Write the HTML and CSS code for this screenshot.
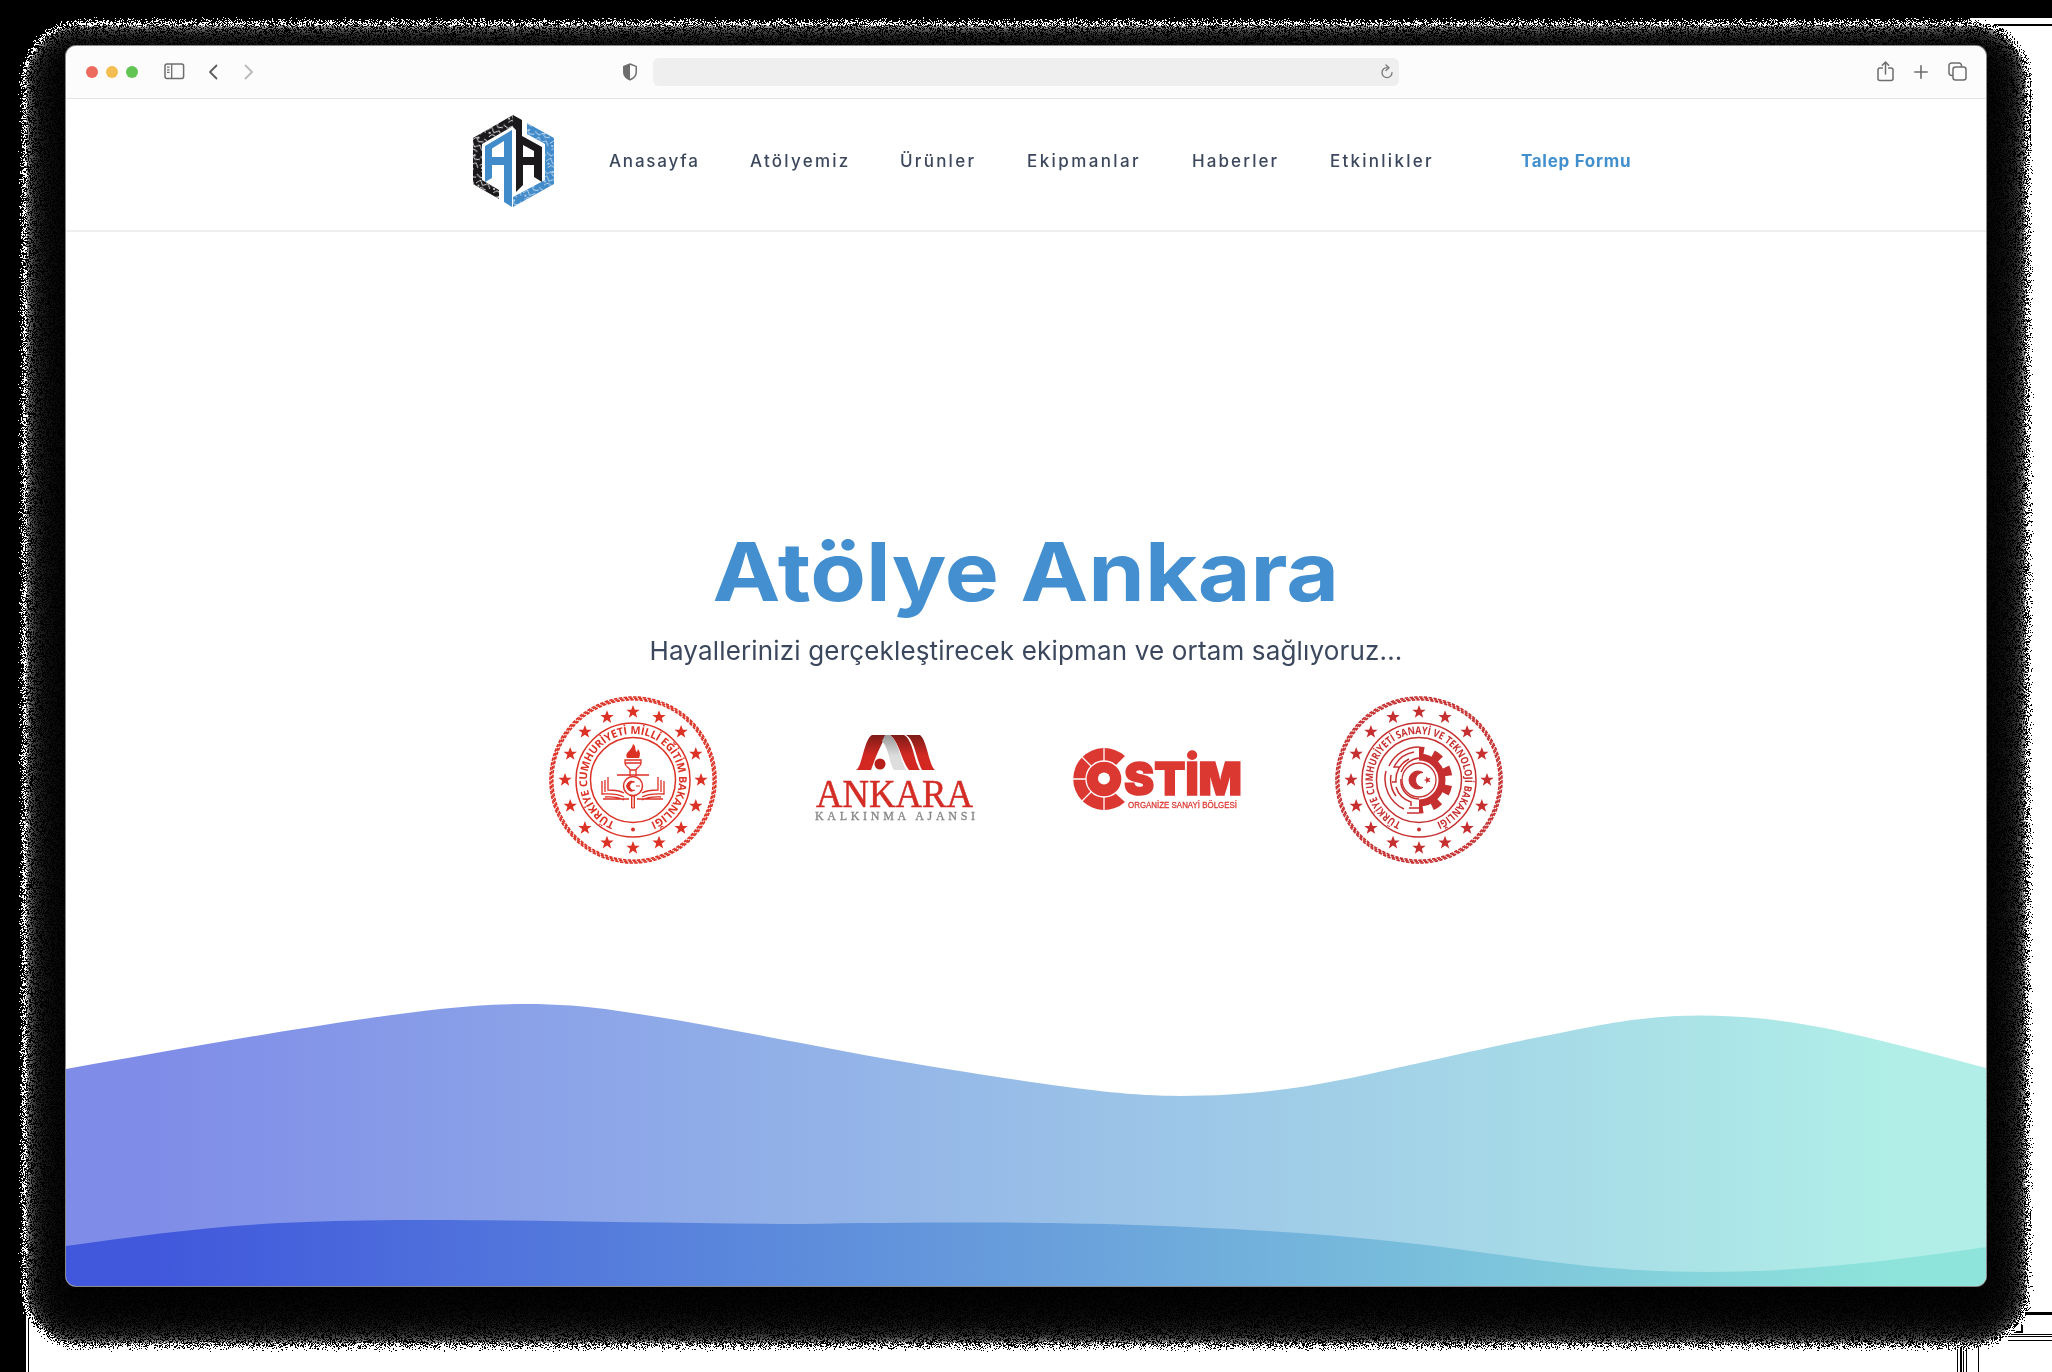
FILE: index.html
```html
<!DOCTYPE html>
<html lang="tr">
<head>
<meta charset="utf-8">
<title>Atölye Ankara</title>
<link rel="stylesheet" href="styles.css">
</head>
<body>
<canvas class="shadow" width="2052" height="1372"></canvas>
<main class="window">
  <div class="toolbar">
    <div class="tools left">
      <span class="dot red"></span><span class="dot yellow"></span><span class="dot green"></span>
      <svg class="sidebar" width="21" height="17" viewBox="0 0 21 17" fill="none" stroke="#6d6d6d" stroke-width="1.5"><rect x="1" y="1" width="18.6" height="14.6" rx="2"/><path d="M7.7 1v14.6M3 4.2h2.6M3 6.8h2.6M3 9.4h2.6" stroke-width="1.3"/></svg>
      <svg class="back" width="10" height="16" viewBox="0 0 10 16" fill="none" stroke="#5c5c5c" stroke-width="1.8" stroke-linecap="round" stroke-linejoin="round"><path d="M8.5 1.5 2 8l6.5 6.5"/></svg>
      <svg class="forward" width="10" height="16" viewBox="0 0 10 16" fill="none" stroke="#bababa" stroke-width="1.8" stroke-linecap="round" stroke-linejoin="round"><path d="M1.5 1.5 8 8l-6.5 6.5"/></svg>
    </div>
    <svg class="shield" width="16" height="18" viewBox="0 0 16 18"><path d="M8 1 14.2 3.4v6c0 3.4-2.6 5.7-6.2 7.4-3.6-1.7-6.2-4-6.2-7.4v-6z" fill="none" stroke="#6d6d6d" stroke-width="1.5"/><path d="M8 1v15.8c-3.6-1.7-6.2-4-6.2-7.4v-6z" fill="#6d6d6d"/></svg>
    <div class="address"><svg width="12" height="15" viewBox="0 0 12 15" fill="none" stroke="#777" stroke-width="1.3" stroke-linecap="round"><path d="M6 3.6a5 5 0 1 0 5 5M5 .9l3 2.8-3 2.8"/></svg></div>
    <div class="tools right">
      <svg width="17" height="21" viewBox="0 0 17 21" fill="none" stroke="#6d6d6d" stroke-width="1.5" stroke-linecap="round" stroke-linejoin="round"><path d="M5.4 7H3a2 2 0 0 0-2 2v8.500a2 2 0 0 0 2 2h11a2 2 0 0 0 2-2V9a2 2 0 0 0-2-2h-2.400M8.500 13V1.300M5.300 4.300l3.200-3.200 3.200 3.200"/></svg>
      <svg width="14" height="14" viewBox="0 0 14 14" fill="none" stroke="#6d6d6d" stroke-width="1.6" stroke-linecap="round"><path d="M7 .8v12.400M.8 7h12.400"/></svg>
      <svg width="19" height="19" viewBox="0 0 19 19" fill="none" stroke="#6d6d6d" stroke-width="1.500"><rect x="5" y="5" width="13" height="13" rx="2.500"/><path d="M5 13.500H3.500A2.500 2.500 0 0 1 1 11V3.500A2.500 2.500 0 0 1 3.500 1H11a2.500 2.500 0 0 1 2.500 2.500V5"/></svg>
    </div>
  </div>

  <header class="header">
    <svg class="logo" width="82" height="92" viewBox="0 0 82 92">
      <defs>
        <pattern id="traces" width="16" height="18" patternUnits="userSpaceOnUse" patternTransform="rotate(12)"><path d="M0 3l5 3 3-3 3 4 5-1M1 12l4-4 3 5 5-3 3 5M4 18l3-3 5 2" fill="none" stroke="#fff" stroke-width=".9"/><circle cx="10" cy="3" r="1" fill="#fff"/><circle cx="4" cy="14" r="1" fill="#fff"/></pattern>
      </defs>
      <path d="M0 23 40 0v11L9 29v36l17 10v9L0 69z" fill="#1b191b"/><path d="M0 23 40 0v11L9 29v36l17 10v9L0 69z" fill="url(#traces)"/>
      <path d="M54 8 81 23v46L40 92V82l32-17V29L54 19z" fill="#428bca"/><path d="M54 8 81 23v46L40 92V82l32-17V29L54 19z" fill="url(#traces)" opacity=".75"/>
      <path d="M39 15V92l-8-5V50H19v13l-7 4V31zM31 26 19 33.500V42h12z" fill="#428bca" fill-rule="evenodd"/>
      <path d="M40 0l9 5v16l20 11v35l-8-5V50H50v20l-7 7V15l-3-3zM50 30v12h11v-6z" fill="#1b191b" fill-rule="evenodd"/>
    </svg>
    <nav class="nav">
      <a class="n1">Anasayfa</a><a class="n2">Atölyemiz</a><a class="n3">Ürünler</a><a class="n4">Ekipmanlar</a><a class="n5">Haberler</a><a class="n6">Etkinlikler</a>
    </nav>
    <a class="cta">Talep Formu</a>
  </header>

  <section class="hero">
    <h1>Atölye Ankara</h1>
    <p>Hayallerinizi gerçekleştirecek ekipman ve ortam sağlıyoruz...</p>
    <div class="partners">
      <svg class="seal" width="168" height="168" viewBox="-84 -84 168 168" fill="none" stroke="#dc3226">
        <defs>
          <path id="ring" d="M-17 42.700A46 46 0 1 1 17 42.700"/>
          <path id="star" d="M0-7 1.800-2.200H6.700L2.800.8 4.200 5.700 0 2.800-4.200 5.700-2.800.8-6.700-2.200H-1.800z" stroke="none"/>
          <g id="stars">
            <use href="#star" y="-68"/><use href="#star" x="26" y="-62.800"/><use href="#star" x="48.100" y="-48.100"/><use href="#star" x="62.800" y="-26"/><use href="#star" x="68"/><use href="#star" x="62.800" y="26"/><use href="#star" x="48.100" y="48.100"/><use href="#star" x="26" y="62.800"/><use href="#star" y="68"/><use href="#star" x="-26" y="62.800"/><use href="#star" x="-48.100" y="48.100"/><use href="#star" x="-62.800" y="26"/><use href="#star" x="-68"/><use href="#star" x="-62.800" y="-26"/><use href="#star" x="-48.100" y="-48.100"/><use href="#star" x="-26" y="-62.800"/>
          </g>
          <g id="rope" stroke-width="1.600"><circle r="83" pathLength="432" stroke-dasharray="2.900 1.100"/><circle r="81.600" pathLength="432" stroke-dasharray="2.900 1.100" stroke-dashoffset="-.9"/><circle r="80.200" pathLength="432" stroke-dasharray="2.900 1.100" stroke-dashoffset="-1.800"/></g>
        </defs>
        <use href="#rope"/>
        <use href="#stars" fill="#dc3226"/>
        <circle r="57" stroke-width="1.500"/><circle r="42.500" stroke-width="1.500"/>
        <text class="ringtext" fill="#dc3226" stroke="none"><textPath href="#ring" textLength="252" startOffset="1">TÜRKİYE CUMHURİYETİ MİLLİ EĞİTİM BAKANLIĞI</textPath></text>
        <circle cy="49.500" r="2" fill="#dc3226" stroke="none"/>
        <path d="M-6-22C-9-28-1-29 0-36c4 3 1 6 4 8l1-3c3 4 2 7 1 9z" fill="#dc3226" stroke="none"/>
        <path d="M-8-20H8v3c0 4-4 4-5 7h-6c-1-3-5-3-5-7zM-8-17H8M-16-5H16M-3-10v6M3-10v6" stroke-width="1.300"/>
        <path d="M-9 17C-17 13-23 14-31 14V1M-9 20c-8-4-14-3-19-3M-25-3v13c6 0 11 0 16 3M9 17c8-4 14-3 22-3V1M9 20c8-4 14-3 19-3M25-3v13c-6 0-11 0-16 3M-28 0v12M28 0v12M-30 19h26M4 19h26" stroke-width="1.300"/>
        <circle cy="6" r="9.500" fill="#fff" stroke-width="1.500"/><path d="M1.500 2A5 5 0 1 0 1.500 10.300 4.200 4.200 0 1 1 1.500 2zM3 6h4" fill="#dc3226" stroke-width="1"/>
        <path d="M-1.500 16h3v12h-3z" fill="#f5b0a8" stroke-width="1"/>
      </svg>
      <svg class="agency" width="168" height="96" viewBox="0 0 168 96">
        <defs><linearGradient id="red" x2="0" y2="1"><stop stop-color="#7d1c18"/><stop offset=".6" stop-color="#d32822"/></linearGradient><linearGradient id="gray" x2="0" y2="1"><stop stop-color="#999"/><stop offset=".6" stop-color="#ddd"/></linearGradient></defs>
        <path d="M61 3H76C68 15 63 30 60 38H45c6-2 8-31 16-35z" fill="url(#red)"/>
        <path d="M74 3h4c9 3 12 26 17 35H83C77 28 79 19 71 9z" fill="url(#gray)"/>
        <path d="M79 3h14c9 4 11 30 16 35H98C90 28 88 9 79 3z" fill="url(#red)"/><path d="M95 3h14c7 5 9 31 15 35h-13C105 27 104 8 95 3z" fill="url(#red)"/><circle cx="69" cy="32" r="5.500" fill="#b71f1b"/>
        <text class="agencyname" x="5" y="75" textLength="157" lengthAdjust="spacingAndGlyphs">ANKARA</text><text class="agencysub" x="4" y="88" textLength="160">KALKINMA AJANSI</text>
      </svg>
      <svg class="ostim" width="168" height="64" viewBox="0 0 168 64">
        <path d="M52 8A31 31 0 1 0 52 54L43 46A19 19 0 0 1 43 17z" fill="#dc3832"/><circle cx="31" cy="31" r="18" fill="#dc3832" stroke="#fff" stroke-width="1.300"/><circle cx="31" cy="30.500" r="6" fill="#fff"/><path d="M31 0v13M31 49v14M0 31h13M9 9l9 9M9 53l9-9" stroke="#fff" stroke-width="1.300"/>
        <text class="ostimname" x="51" y="47" textLength="118" lengthAdjust="spacingAndGlyphs">STİM</text><text class="ostimsub" x="55" y="60" textLength="109" lengthAdjust="spacingAndGlyphs">ORGANİZE SANAYİ BÖLGESİ</text>
      </svg>
      <svg class="seal" width="168" height="168" viewBox="-84 -84 168 168" fill="none" stroke="#c62f30">
        <use href="#rope"/>
        <use href="#stars" fill="#c62f30"/>
        <circle r="57" stroke-width="1.500"/><circle r="42.500" stroke-width="1.500"/>
        <text class="ringtext small" fill="#c62f30" stroke="none"><textPath href="#ring" textLength="252" startOffset="1" lengthAdjust="spacingAndGlyphs">TÜRKİYE CUMHURİYETİ SANAYİ VE TEKNOLOJİ BAKANLIĞI</textPath></text>
        <circle cy="49.500" r="2" fill="#c62f30" stroke="none"/>
        <path d="M0-23A23 23 0 0 1 0 23" stroke-width="7"/><path d="M0-29.500A29.500 29.500 0 0 1 0 29.500" stroke-width="8" stroke-dasharray="5 9.500 9 9.500 9 9.500 9 9.500 9 9.500 9"/>
        <path d="M0-33A33 33 0 0 0-30-14M-33-9A33 33 0 0 0-15 29M-5-28A28 28 0 0 0-25-13h5M-28-5A28 28 0 0 0-23 16M-10-21A23 23 0 0 0-23 2h-4M-23 7A23 23 0 0 0-8 22v4M0-22A22 22 0 0 0-18-8M-18-1A18 18 0 0 0 0 19M-12 33H0M-10 28H0" stroke-width="1.500"/>
        <circle r="17" stroke-width="1.300"/><path d="M4-7.500A9 9 0 1 0 4 7.500 7.500 7.500 0 1 1 4-7.500z" fill="#c62f30"/><use href="#star" transform="translate(8.500 0) rotate(-18) scale(.55)" fill="#c62f30"/>
      </svg>
    </div>
    <svg class="waves" width="1920" height="284" viewBox="0 0 1920 284">
      <defs><linearGradient id="sea"><stop offset=".05" stop-color="#4158dc"/><stop offset=".95" stop-color="#8ee4db"/></linearGradient><linearGradient id="seaLight"><stop offset=".05" stop-color="#808de8"/><stop offset=".95" stop-color="#b0eee7"/></linearGradient></defs>
      <path d="M0 67C90 51 200 31 306 15.700C360 8 410 2 460 2C490 2 520 4 551 8.700C610 17 670 29 735 41C790 52 850 62 900 70C1000 86 1060 94 1114 94C1200 94 1260 82 1335 65C1390 53 1440 41 1494 31C1550 19 1590 13.500 1635 13.500C1700 13.500 1755 24 1812 38C1850 47 1885 57 1920 66V284H0z" fill="url(#seaLight)"/>
      <path d="M0 244C80 233 150 223 240 220C370 215 540 221 735 222C850 220 960 220 1040 222C1170 226 1270 232 1360 243C1450 254 1530 270 1640 270C1740 270 1830 258 1920 245V284H0z" fill="url(#sea)"/>
    </svg>
  </section>
</main>
<script src="shadow.js"></script>
</body>
</html>
```
FILE: styles.css
```css
* { box-sizing: border-box; }
body { margin: 0; width: 2052px; height: 1372px; overflow: hidden; padding: 46px 66px; background: #000; font-family: Inter, "Noto Sans", sans-serif; color: #3b475c; }
.shadow { position: absolute; left: 0; top: 0; z-index: -1; }
.window { display: flex; flex-direction: column; width: 1920px; height: 1240px; border-radius: 10px; overflow: hidden; background: #fff; box-shadow: 0 0 0 1px #8a8a8a; }
.toolbar { flex: none; display: grid; grid-template-columns: 556px 31px 746px 1fr; align-items: center; height: 53px; padding-bottom: 1px; background: #fcfcfc; border-bottom: 1px solid #e3e3e3; }
.tools { display: flex; align-items: center; }
.left { padding-left: 20px; }
.dot { width: 12px; height: 12px; margin-right: 8px; border-radius: 50%; }
.red { background: #ec6a5e; }
.yellow { background: #f4bd50; }
.green { background: #61c454; }
.sidebar { margin-left: 18px; }
.back { margin-left: 23px; }
.forward { margin-left: 26px; }
.address { display: flex; align-items: center; justify-content: flex-end; height: 28px; padding-right: 6px; border-radius: 6px; background: #efefef; }
.right { justify-content: flex-end; gap: 20px; padding-right: 19px; }
.header { flex: none; display: flex; align-items: center; height: 133px; padding-left: 407px; border-bottom: 2px solid #eee; }
.logo { flex: none; margin-top: -7px; }
.nav { display: flex; margin-left: 54px; margin-top: -7px; font-size: 17px; font-weight: 500; line-height: 24px; }
.nav a { white-space: nowrap; letter-spacing: 2.25px; }
.nav .n1 { width: 141px; letter-spacing: 1.8px; }
.n2 { width: 150px; }
.n3 { width: 127px; }
.nav .n4 { width: 165px; letter-spacing: 2.4px; }
.nav .n5 { width: 138px; letter-spacing: 2.1px; }
.n6 { width: 191px; }
.cta { margin-top: -7px; font-size: 17px; line-height: 24px; font-weight: 700; color: #428fce; white-space: nowrap; letter-spacing: .7px; }
.hero { flex: 1; display: flex; flex-direction: column; align-items: center; }
h1 { margin: 290px 0 0; font-size: 81.500px; line-height: 100px; font-weight: 700; color: #438fcf; white-space: nowrap; transform: scaleX(1.116); }
p { margin: 10px 0 0; font-size: 26px; line-height: 38px; font-weight: 400; white-space: nowrap; letter-spacing: .16px; }
.partners { display: grid; grid-template-columns: repeat(4, 168px); column-gap: 94px; align-items: center; height: 168px; margin-top: 26px; }
.ringtext { font: 700 10.800px "Open Sans", sans-serif; }
.small { font-size: 10.500px; }
.agencyname { font: 39px "Liberation Serif", serif; fill: #d32d26; stroke: #d32d26; stroke-width: .5px; }
.agencysub { font: 12px "Liberation Serif", serif; fill: #858585; stroke: #858585; stroke-width: .3px; }
.ostimname { font: 900 46px Inter, sans-serif; fill: #dc3832; stroke: #dc3832; stroke-width: 1.500px; }
.ostimsub { font: 9.500px "Liberation Sans", sans-serif; fill: #dc3832; stroke: #dc3832; stroke-width: .3px; }
.waves { display: block; flex: none; margin-top: auto; }
```
FILE: shadow.js
```javascript
// Dithered drop shadow around the window.
const canvas = document.querySelector('.shadow');
const ctx = canvas.getContext('2d');
const W = canvas.width, H = canvas.height;
const fill = (color, rects) => {
  ctx.fillStyle = color;
  for (const r of rects) ctx.fillRect(...r);
};
fill('#000', [[0, 0, W, H]]);
fill('#fff', [[1970, 18, 82, H], [26, 1305, W, 67]]);
fill('#000', [
  [1980, 24, 72, 2], [28, 1318, 1, 54], [2030, 75, 1, 70], [2030, 1209, 1, 18],
  [2025, 1312, 27, 3], [2008, 1334, 44, 1], [2008, 1336, 44, 1], [2008, 1340, 44, 1],
  [1957, 1345, 1, 27], [1960, 1345, 2, 27], [1963, 1345, 1, 27], [1966, 1345, 1, 27], [1978, 1345, 1, 27],
  [2014, 1331, 9, 2], [2021, 1324, 2, 8]
]);
const image = ctx.getImageData(0, 0, W, H);
let seed = 7;
const random = () => {
  seed = (Math.imul(seed, 1664525) + 1013904223) >>> 0;
  return seed / 4294967296;
};
for (let y = 0; y < H; y++) {
  for (let x = 0; x < W; x++) {
    const dx = Math.max(80 - x, 0, x - 1971);
    const dy = Math.max(79 - y, 0, y - 1289);
    const t = 1 - Math.hypot(dx, dy) / 66;
    if (t <= 0) continue;
    const alpha = Math.round(75 * Math.pow(t, 2.3) + (random() - 0.5) * 0.8);
    if (alpha < 1) continue;
    const v = Math.min(255, (random() < 0.45 ? 0 : 255) / alpha);
    const i = (y * W + x) * 4;
    image.data[i] = image.data[i + 1] = image.data[i + 2] = v;
  }
}
ctx.putImageData(image, 0, 0);
```
